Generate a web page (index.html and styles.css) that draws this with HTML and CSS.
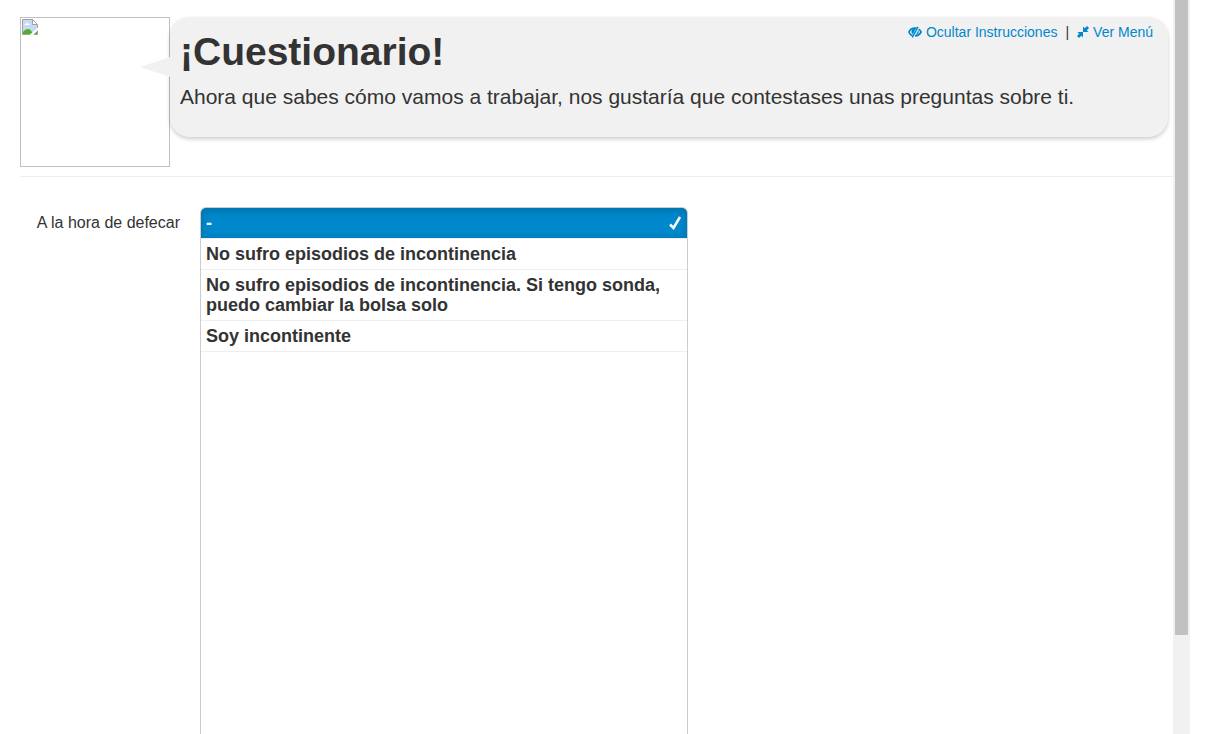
FILE: index.html
```html
<!DOCTYPE html>
<html lang="es">
<head>
<meta charset="utf-8">
<title>¡Cuestionario!</title>
<link rel="stylesheet" href="styles.css">
</head>
<body>
<main class="page">
  <header class="intro">
    <div class="avatar">
      <svg class="avatar-icon" viewBox="0 0 16 16" aria-hidden="true">
        <path d="M.5.5h10l5 5v10H.5z" fill="#c6d9f5" stroke="#a0a0a0"/>
        <path d="M10.500.5v5h5z" fill="#fff" stroke="#a0a0a0"/>
        <path d="M2.500 6c0-1 1-1.500 1.700-1.200C4.600 3.500 6.500 3.700 6.700 5c1 0 1.300.5 1.300 1z" fill="#fff"/>
        <path d="M1 15v-2c3-4 7-4 9 0l1 2zM12 15l3-3v3z" fill="#4fae2c"/>
        <path d="M16 8.500V11l-5 5H7.500z" fill="#fff"/>
      </svg>
    </div>
    <section class="bubble">
      <nav class="tools">
        <a href="#ocultar"><svg class="icon-eye" viewBox="0 0 14 12" aria-hidden="true">
          <path d="M4.500 9.700C2.800 9 1.500 7.700.9 6 2 3.500 4.300 2.100 7 2.100c.6 0 1.200.1 1.700.2" fill="none" stroke="currentColor" stroke-width="1.700"/>
          <path d="M10.700 3.200c1.100.7 2 1.600 2.400 2.800-1.300 2.400-3.400 3.900-6.100 3.900" fill="none" stroke="currentColor" stroke-width="1.700"/>
          <path d="M8 2 4.800 8.200C2.300 6.500 3.200 2.200 8 2zM10.500 4c1 2.400-.6 4.600-2.800 5.200z" fill="currentColor"/>
          <path d="M10 .8 4.200 11.300" stroke="currentColor" stroke-width="1.500"/>
        </svg>Ocultar Instrucciones</a>
        <span class="divider">|</span>
        <a href="#menu"><svg class="icon-shrink" viewBox="0 0 12 12" aria-hidden="true">
          <path d="M6 6v5.500L4.300 9.800 2 12 0 10l2.200-2.300L.5 6zM6 6V.5l1.700 1.700L10 0l2 2-2.200 2.300L11.500 6z" fill="currentColor"/>
        </svg>Ver Menú</a>
      </nav>
      <h1 class="title">¡Cuestionario!</h1>
      <p class="lead">Ahora que sabes cómo vamos a trabajar, nos gustaría que contestases unas preguntas sobre ti.</p>
    </section>
  </header>
  <form class="question">
    <span class="question-label" id="pregunta">A la hora de defecar</span>
    <div class="choices" role="radiogroup" aria-labelledby="pregunta">
      <label class="choice"><input class="choice-input" type="radio" name="defecar" checked><span>-</span><svg class="check" viewBox="0 0 14 16" aria-hidden="true"><path d="M2 9.500 5.500 13 12 2" fill="none" stroke="currentColor" stroke-width="2.500"/></svg></label>
      <label class="choice"><input class="choice-input" type="radio" name="defecar"><span>No sufro episodios de incontinencia</span></label>
      <label class="choice"><input class="choice-input" type="radio" name="defecar"><span>No sufro episodios de incontinencia. Si tengo sonda, puedo cambiar la bolsa solo</span></label>
      <label class="choice"><input class="choice-input" type="radio" name="defecar"><span>Soy incontinente</span></label>
    </div>
  </form>
</main>
<div class="scrollbar" aria-hidden="true"><div class="thumb"></div></div>
</body>
</html>
```
FILE: styles.css
```css
* {
  box-sizing: border-box;
}

body {
  display: flex;
  height: 100vh;
  margin: 0;
  padding-right: 31px;
  overflow: hidden;
  background: #fff;
  color: #333;
  font-family: "Liberation Sans", Arial, sans-serif;
  font-size: 14px;
  line-height: 20px;
}

.page {
  display: flex;
  flex: 1;
  flex-direction: column;
  min-width: 0;
  padding: 17px 0 0 20px;
}

.intro {
  display: flex;
  align-items: flex-start;
  padding: 0 5px 9px 0;
  border-bottom: 1px solid #eee;
}

.avatar {
  flex: none;
  width: 150px;
  height: 150px;
  padding: 1px;
  border: 1px solid #c0c0c0;
}

.avatar-icon {
  display: block;
  width: 16px;
  height: 16px;
}

.bubble {
  position: relative;
  flex: 1;
  min-height: 120px;
  padding: 15px 10px 20px;
  border-radius: 20px;
  background: #f1f1f1;
  box-shadow: 0 2px 4px rgba(0, 0, 0, 0.2);
}

.bubble::before {
  content: "";
  position: absolute;
  top: 40px;
  left: -30px;
  border: solid transparent;
  border-width: 10px 30px 10px 0;
  border-right-color: #f1f1f1;
}

.tools {
  position: absolute;
  top: 5px;
  right: 15px;
  display: flex;
}

.tools a {
  display: flex;
  align-items: center;
  gap: 4px;
  color: #08c;
  text-decoration: none;
}

.divider {
  margin: 0 8px;
}

.icon-eye {
  width: 14px;
  height: 12px;
}

.icon-shrink {
  width: 12px;
  height: 12px;
}

.title {
  margin: 0 0 10px;
  font-size: 39px;
  line-height: 40px;
}

.lead {
  margin: 0;
  font-size: 21px;
  line-height: 30px;
}

.question {
  display: flex;
  flex: 1;
  gap: 20px;
  min-height: 0;
  padding-top: 30px;
}

.question-label {
  flex: none;
  width: 160px;
  padding-top: 6px;
  font-size: 16px;
  text-align: right;
}

.choices {
  flex: 0 1 488px;
  border: 1px solid #ccc;
  border-bottom: 0;
  border-radius: 6px 6px 0 0;
  overflow: hidden;
  font-size: 18px;
  font-weight: bold;
}

.choice {
  display: flex;
  align-items: center;
  justify-content: space-between;
  padding: 5px;
  border-bottom: 1px solid #eee;
  cursor: pointer;
}

.choice-input {
  position: absolute;
  margin: 0;
  opacity: 0;
}

.choice:has(:checked) {
  background: #08c;
  background-clip: padding-box;
  box-shadow: inset 0 2px 10px rgba(0, 0, 0, 0.2);
  color: #fff;
}

.check {
  width: 14px;
  height: 16px;
}

.scrollbar {
  flex: none;
  width: 17px;
  padding: 0 2px;
  background: #f1f1f1;
}

.thumb {
  height: 86.5%;
  background: #c1c1c1;
}
```
